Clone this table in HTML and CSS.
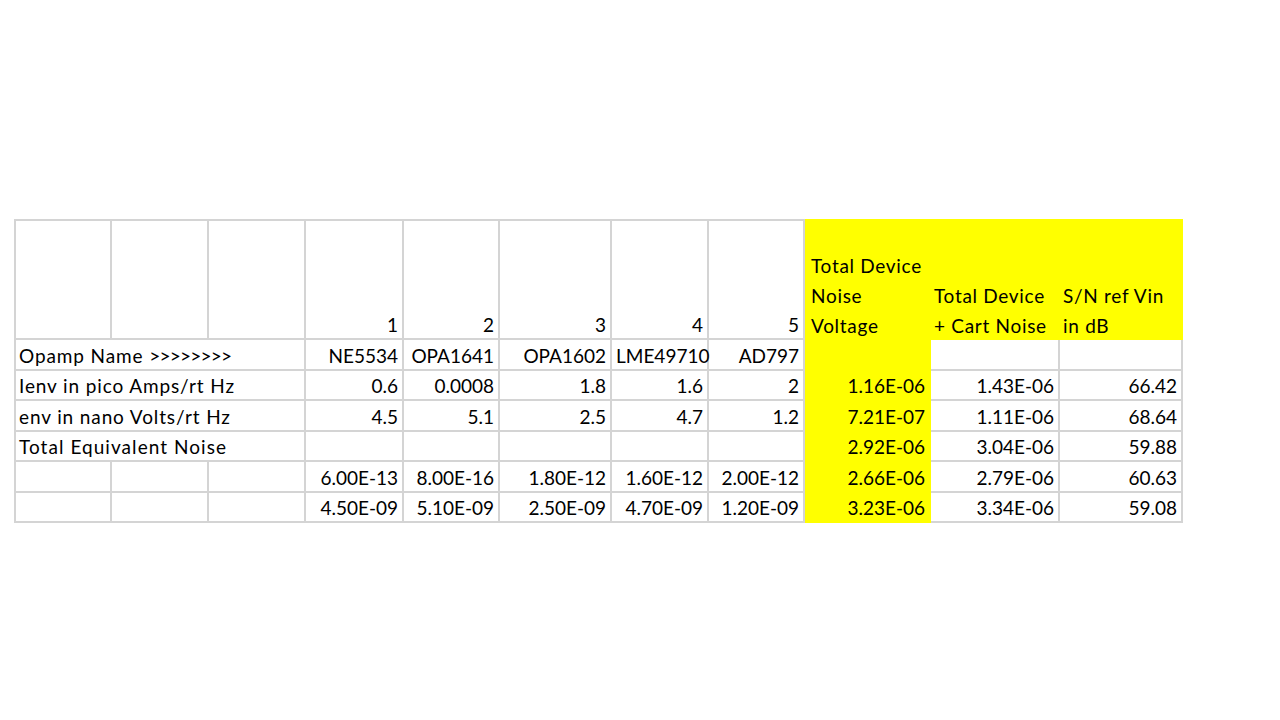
FILE: index.html
```html
<!DOCTYPE html>
<html>
<head>
<meta charset="utf-8">
<link rel="stylesheet" href="styles.css">
</head>
<body>
<div class="page">
<table class="sheet">
  <colgroup>
    <col class="c1"><col class="c2"><col class="c3"><col class="c4"><col class="c5"><col class="c6"><col class="c7"><col class="c8"><col class="c9"><col class="c10"><col class="c11">
  </colgroup>
  <tr class="head">
    <td class="first"></td><td></td><td></td>
    <td class="num">1</td><td class="num">2</td><td class="num">3</td><td class="num">4</td><td class="num">5</td>
    <td class="hl hl-a"><div class="htext">Total Device<br>Noise<br>Voltage</div></td>
    <td class="hl hl-b"><div class="htext">Total Device<br>+ Cart Noise</div></td>
    <td class="hl hl-c"><div class="htext">S/N ref Vin<br>in dB</div></td>
  </tr>
  <tr>
    <td class="first label" colspan="3">Opamp Name <span class="arrows">&gt;&gt;&gt;&gt;&gt;&gt;&gt;&gt;</span></td>
    <td class="num">NE5534</td><td class="num">OPA1641</td><td class="num">OPA1602</td><td class="num">LME49710</td><td class="num">AD797</td>
    <td class="hl col9"></td><td></td><td></td>
  </tr>
  <tr>
    <td class="first label" colspan="3">Ienv in pico Amps/rt Hz</td>
    <td class="num">0.6</td><td class="num">0.0008</td><td class="num">1.8</td><td class="num">1.6</td><td class="num">2</td>
    <td class="hl col9 num">1.16E-06</td><td class="num">1.43E-06</td><td class="num">66.42</td>
  </tr>
  <tr>
    <td class="first label" colspan="3">env in nano Volts/rt Hz</td>
    <td class="num">4.5</td><td class="num">5.1</td><td class="num">2.5</td><td class="num">4.7</td><td class="num">1.2</td>
    <td class="hl col9 num">7.21E-07</td><td class="num">1.11E-06</td><td class="num">68.64</td>
  </tr>
  <tr>
    <td class="first label wide" colspan="3">Total Equivalent Noise</td>
    <td></td><td></td><td></td><td></td><td></td>
    <td class="hl col9 num">2.92E-06</td><td class="num">3.04E-06</td><td class="num">59.88</td>
  </tr>
  <tr>
    <td class="first"></td><td></td><td></td>
    <td class="num">6.00E-13</td><td class="num">8.00E-16</td><td class="num">1.80E-12</td><td class="num">1.60E-12</td><td class="num">2.00E-12</td>
    <td class="hl col9 num">2.66E-06</td><td class="num">2.79E-06</td><td class="num">60.63</td>
  </tr>
  <tr>
    <td class="first"></td><td></td><td></td>
    <td class="num">4.50E-09</td><td class="num">5.10E-09</td><td class="num">2.50E-09</td><td class="num">4.70E-09</td><td class="num">1.20E-09</td>
    <td class="hl col9 num">3.23E-06</td><td class="num">3.34E-06</td><td class="num">59.08</td>
  </tr>
</table>
</div>
</body>
</html>
```
FILE: styles.css
```css
html, body {
  margin: 0;
  padding: 0;
  background: #ffffff;
}

.page {
  width: 1280px;
  height: 720px;
  padding: 219px 0 0 14px;
  box-sizing: border-box;
}

.sheet {
  table-layout: fixed;
  border-collapse: separate;
  border-spacing: 0;
  width: 1169px;
  font-family: Lato, "Liberation Sans", sans-serif;
  font-size: 19px;
  color: #000000;
}

.c1 { width: 98px; }
.c2 { width: 97px; }
.c3 { width: 97px; }
.c4 { width: 98px; }
.c5 { width: 96px; }
.c6 { width: 112px; }
.c7 { width: 97px; }
.c8 { width: 96px; }
.c9 { width: 126px; }
.c10 { width: 129px; }
.c11 { width: 123px; }

.sheet td {
  box-sizing: border-box;
  height: 30.5px;
  padding: 0 3px 0 4px;
  line-height: 26px;
  vertical-align: bottom;
  white-space: nowrap;
  overflow: visible;
  border-right: 2px solid #d4d4d4;
  border-bottom: 2px solid #d4d4d4;
}

.sheet td.first {
  border-left: 2px solid #d4d4d4;
}

.sheet tr.head td {
  height: 121px;
  border-top: 2px solid #d4d4d4;
}

.sheet td.num {
  text-align: right;
  padding-right: 4px;
}

.sheet td.label {
  padding-left: 3px;
  letter-spacing: 0.88px;
}

.sheet td.wide {
  letter-spacing: 1.05px;
}

.arrows {
  letter-spacing: -0.75px;
}

.sheet td.hl {
  background: #ffff00;
  border-color: transparent;
}

.sheet tr.head td.hl {
  border-color: transparent;
  padding-left: 3px;
  letter-spacing: 0.7px;
}

.sheet tr.head td.hl-a {
  padding-left: 6px;
}

.htext {
  line-height: 30px;
  margin-bottom: -3px;
  text-align: left;
}
```
